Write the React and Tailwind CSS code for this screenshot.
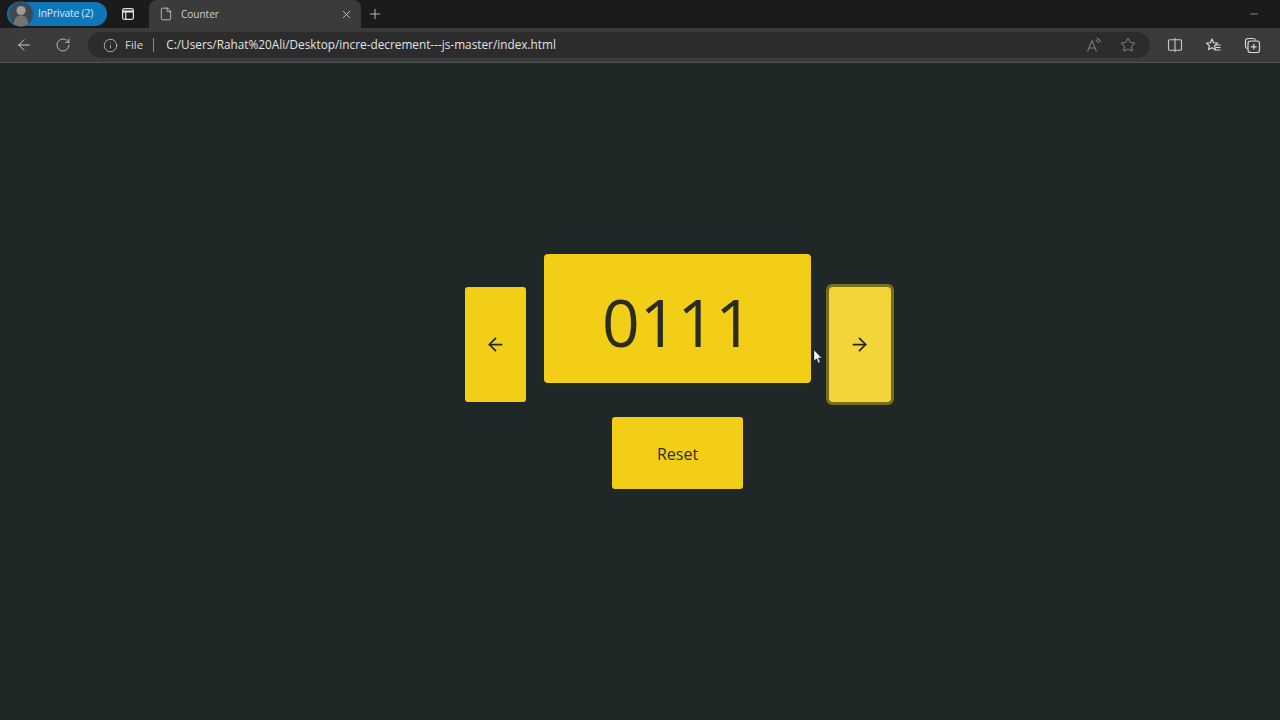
import React from "react";
import { ArrowLeft, ArrowRight, RotateCw, Info, File, X, Plus, Star, Minus } from "lucide-react";

function Avatar() {
  return (
    <svg width="26" height="26" viewBox="0 0 26 26" className="shrink-0">
      <circle cx="13" cy="13" r="12" fill="#3f4a4f" stroke="#1f5f88" strokeWidth="1.5" />
      <circle cx="13" cy="9.5" r="4.6" fill="#a09c98" />
      <path d="M5.8 23c.4-6 3-8.6 7.2-8.6s6.800 2.600 7.200 8.600a12 12 0 0 1-14.400 0z" fill="#77746f" />
    </svg>
  );
}

function TabsIcon() {
  return (
    <svg width="16" height="16" viewBox="0 0 16 16" fill="none" stroke="#e0e0e0" strokeWidth="1.2">
      <rect x="2.600" y="2.600" width="10.800" height="10.800" rx="1.800" />
      <path d="M2.600 5.500h10.800" strokeWidth="2.200" />
      <path d="M5.800 5.500v7.900" />
    </svg>
  );
}

function ReadAloud() {
  return (
    <svg width="16" height="16" viewBox="0 0 16 16" fill="none" stroke="#7a7a7a" strokeWidth="1.100">
      <path d="M1.500 14.500 6 3.500l4.500 11M3 11h6" />
      <path d="M9.500 3.200c1.500.3 2.500 1.100 3 2.600M10.500 1.200c2 .4 3.500 1.700 4 3.800" />
    </svg>
  );
}

function SplitIcon() {
  return (
    <svg width="16" height="16" viewBox="0 0 16 16" fill="none" stroke="#c8c8c8" strokeWidth="1.100">
      <path d="M8 2.800H2.800a1.300 1.300 0 0 0-1.300 1.300v7.800a1.300 1.300 0 0 0 1.300 1.300H8zM8 2.800h5.200a1.300 1.300 0 0 1 1.300 1.300v7.800a1.300 1.300 0 0 1-1.300 1.300H8M8 1v14" />
    </svg>
  );
}

function FavsIcon() {
  return (
    <svg width="17" height="17" viewBox="0 0 17 17" fill="none" stroke="#d8d8d8" strokeWidth="1.150">
      <path d="m7 2 1.600 3.700 3.900.4-2.900 2.600.8 3.900L7 10.700l-3.400 1.900.8-3.900L1.500 6.100l3.900-.4z" strokeLinejoin="round" />
      <path d="M11 8h4.500M10.500 10.500h5M9.500 13h6" />
    </svg>
  );
}

function CollectionsIcon() {
  return (
    <svg width="17" height="17" viewBox="0 0 17 17" fill="none" stroke="#d8d8d8" strokeWidth="1.150">
      <path d="M3.500 11.500A2.200 2.200 0 0 1 1.500 9.300V4a2.500 2.500 0 0 1 2.500-2.500h5.300a2.200 2.200 0 0 1 2.200 2" />
      <rect x="4" y="4" width="11.500" height="11.500" rx="2.500" />
      <path d="M9.800 7v5.500M7 9.800h5.500" />
    </svg>
  );
}

function Cursor() {
  return (
    <svg width="9" height="15" viewBox="0 0 9 15" className="absolute left-[813px] top-[349px]">
      <path d="M1 1v11l2.600-2.400L5.400 14l1.700-.7-1.800-4.300H8.600z" fill="#fff" stroke="#222" strokeWidth=".5" />
    </svg>
  );
}

export default function App() {
  return (
    <div className="relative flex h-[720px] w-[1280px] flex-col overflow-hidden bg-[#1f2727] font-['Open_Sans','Noto_Sans',sans-serif]">
      <div className="flex h-[28px] items-center bg-[#1b1b1b]">
        <div className="ml-[7px] flex h-[24px] w-[100px] items-center rounded-full bg-[#0f77b8] pl-[1px]">
          <Avatar />
          <span className="ml-[4px] text-[10.400px] tracking-[-0.2px] text-[#d4e8f5]">InPrivate (2)</span>
        </div>
        <div className="ml-[13px] flex w-[16px] justify-center">
          <TabsIcon />
        </div>
        <div className="ml-[13px] flex h-[28px] w-[212px] items-center rounded-t-lg bg-[#3b3b3b] pl-[10px] pr-[8px]">
          <File size={14} strokeWidth={1.300} color="#d8d8d8" />
          <span className="ml-[8px] pt-[1px] text-[10px] text-[#d0d0d0]">Counter</span>
          <X size={13} strokeWidth={1.400} color="#e0e0e0" className="ml-auto" />
        </div>
        <Plus size={16} strokeWidth={1.200} color="#d8d8d8" className="ml-[6px]" />
        <Minus size={12} strokeWidth={1.200} color="#cfcfcf" className="ml-auto mr-[20px]" />
      </div>
      <div className="flex h-[35px] items-center border-b border-[#4d5352] bg-[#3b3b3b]">
        <ArrowLeft size={18} strokeWidth={1.200} color="#dcdcdc" className="ml-[15px]" />
        <RotateCw size={16} strokeWidth={1.200} color="#d0d0d0" className="ml-[22px]" />
        <div className="ml-[17px] flex h-[26px] w-[1062px] items-center rounded-full bg-[#2c2c2c] pl-[15px] pr-[5px]">
          <Info size={15} strokeWidth={1.200} color="#d0d0d0" />
          <span className="ml-[7px] text-[11.500px] text-[#d8d8d8]">File</span>
          <span className="ml-[10px] h-[14px] w-px bg-[#8a8a8a]" />
          <span className="ml-[12px] text-[11.800px] text-[#e2e2e2]">C:/Users/Rahat%20Ali/Desktop/incre-decrement---js-master/index.html</span>
          <div className="ml-auto flex items-center gap-[18px] pr-[9px]">
            <ReadAloud />
            <Star size={16} strokeWidth={1.100} color="#a8a8a8" />
          </div>
        </div>
        <div className="ml-[17px] flex items-center gap-[22px]">
          <SplitIcon />
          <FavsIcon />
          <CollectionsIcon />
        </div>
      </div>
      <main className="flex flex-1 justify-center pt-[191px]">
        <div className="ml-[76px] grid h-fit grid-cols-[61px_267px_62px] grid-rows-[148px_auto] gap-x-[18px]">
          <button className="mt-[33px] flex h-[115px] items-center justify-center rounded-[3px] bg-[#f2cf16] text-[#24261f]">
            <ArrowLeft size={21} strokeWidth={2} />
          </button>
          <div className="flex h-[129px] items-center justify-center rounded-[4px] bg-[#f2cf16] pt-[5px] text-[66px] leading-none text-[#2a2c20]">
            0111
          </div>
          <button className="mt-[33px] flex h-[115px] items-center justify-center rounded-[3px] bg-[#f3d53a] pr-[2px] text-[#24261f] outline-[3px] outline-[#7a6d1d]">
            <ArrowRight size={21} strokeWidth={2} />
          </button>
          <button className="col-start-2 mt-[15px] flex h-[72px] w-[131px] items-center justify-center justify-self-center rounded-[3px] bg-[#f2cf16] pt-[1px] text-[16px] text-[#2d2d1c]">
            Reset
          </button>
        </div>
      </main>
      <Cursor />
    </div>
  );
}
